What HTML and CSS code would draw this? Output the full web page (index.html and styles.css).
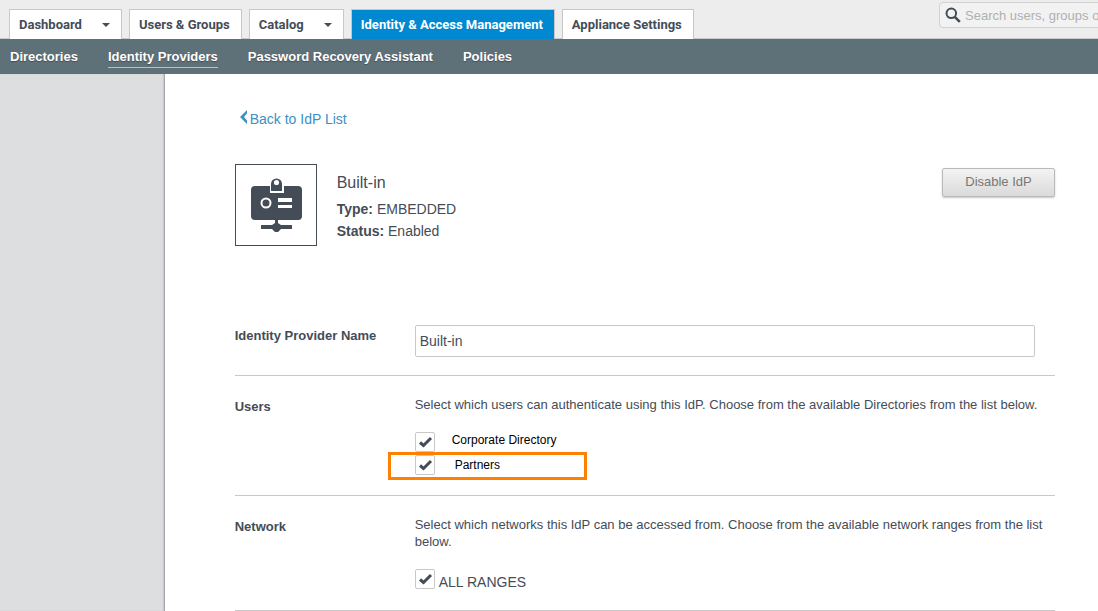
FILE: index.html
```html
<!DOCTYPE html>
<html lang="en">
<head>
<meta charset="utf-8">
<title>Identity Providers</title>
<link rel="stylesheet" href="styles.css">
</head>
<body>
<header class="topbar">
  <nav class="tabs" aria-label="Main">
    <a class="tab" href="#">Dashboard<span class="caret"></span></a>
    <a class="tab" href="#">Users &amp; Groups</a>
    <a class="tab" href="#">Catalog<span class="caret"></span></a>
    <a class="tab tab-active" href="#">Identity &amp; Access Management</a>
    <a class="tab" href="#">Appliance Settings</a>
  </nav>
  <label class="search">
    <svg class="search-icon" viewBox="0 0 16 16" aria-hidden="true"><circle cx="6.3" cy="6.3" r="4.8" fill="none" stroke="#444c55" stroke-width="2"/><path d="M9.8 9.8 14.8 14.8" stroke="#444c55" stroke-width="2.6"/></svg>
    <input class="search-input" type="text" aria-label="Search" placeholder="Search users, groups or applications">
  </label>
</header>
<nav class="subnav" aria-label="Section">
  <a class="sublink" href="#">Directories</a>
  <a class="sublink sublink-active" href="#">Identity Providers</a>
  <a class="sublink" href="#">Password Recovery Assistant</a>
  <a class="sublink" href="#">Policies</a>
</nav>
<div class="layout">
  <aside class="sidebar"></aside>
  <main class="content">
    <a class="back" href="#"><svg class="back-icon" viewBox="0 0 8 14" aria-hidden="true"><path d="M7 0v3.600L4 7l3 3.400V14L0 7z" fill="#3d8fc4"/></svg>Back to IdP List</a>
    <section class="summary">
      <div class="idp-icon">
        <svg viewBox="0 0 80 80" aria-hidden="true">
          <rect x="15" y="21" width="51" height="34" rx="4" fill="#444c57"/>
          <path d="M34 28V20a7 7 0 0 1 14 0v8z" fill="#fff"/>
          <path d="M35 26V19a5.500 5.500 0 0 1 11 0v7z" fill="#444c57"/>
          <circle cx="40.500" cy="17.500" r="2.600" fill="#fff"/>
          <circle cx="30" cy="38" r="4.500" fill="none" stroke="#fff" stroke-width="2"/>
          <path d="M42 33h14v4H42zM42 40h14v3H42z" fill="#fff"/>
          <path d="M39 55h3v3l3 2h11v4H45l-3 3h-3l-3-3H25v-4h11l3-2z" fill="#444c57"/>
        </svg>
      </div>
      <div class="details">
        <h1 class="idp-name">Built-in</h1>
        <p class="detail"><b>Type:</b> EMBEDDED</p>
        <p class="detail"><b>Status:</b> Enabled</p>
      </div>
      <button class="disable" type="button">Disable IdP</button>
    </section>
    <form class="form">
      <div class="row row-name">
        <label class="row-title" for="idp-name">Identity Provider Name</label>
        <div class="row-body"><input class="name-input" id="idp-name" type="text" value="Built-in"></div>
      </div>
      <div class="row">
        <h2 class="row-title">Users</h2>
        <div class="row-body">
          <p class="hint">Select which users can authenticate using this IdP. Choose from the available Directories from the list below.</p>
          <div class="directories">
            <label class="directory"><input class="check" type="checkbox" checked>Corporate Directory</label>
            <label class="directory directory-marked"><input class="check" type="checkbox" checked>Partners</label>
          </div>
        </div>
      </div>
      <div class="row">
        <h2 class="row-title">Network</h2>
        <div class="row-body">
          <p class="hint">Select which networks this IdP can be accessed from. Choose from the available network ranges from the list below.</p>
          <label class="range"><input class="check" type="checkbox" checked>ALL RANGES</label>
        </div>
      </div>
    </form>
  </main>
</div>
</body>
</html>
```
FILE: styles.css
```css
*, *::after { box-sizing: border-box; }
body {
  margin: 0;
  min-height: 100vh;
  display: flex;
  flex-direction: column;
  overflow-x: hidden;
  background: #fff;
  color: #444c57;
  font-family: "Liberation Sans", Arial, sans-serif;
  font-size: 14px;
}
h1, h2, p { margin: 0; }
a { text-decoration: none; }
.topbar {
  display: flex;
  align-items: flex-start;
  height: 39px;
  background: #ededed;
  border-bottom: 1px solid #c8c8c8;
  overflow-x: clip;
}
.tabs { display: flex; gap: 7px; padding: 9px 0 0 9px; }
.tab {
  display: flex;
  align-items: center;
  height: 30px;
  padding: 0 11px 0 9px;
  border: 1px solid #c8c8c8;
  border-bottom: 0;
  background: #fff;
  color: #444c57;
  font-family: Roboto, "Liberation Sans", sans-serif;
  font-size: 13px;
  font-weight: bold;
  white-space: nowrap;
}
.tab-active { background: #0089d0; color: #fff; }
.caret {
  margin-left: 20px;
  border: 4px solid transparent;
  border-top-color: #444c57;
  border-bottom: 0;
}
.search {
  display: flex;
  flex: none;
  align-items: center;
  gap: 4px;
  width: 240px;
  height: 26px;
  margin: 2px -81px 0 auto;
  padding: 0 5px;
  border: 1px solid #d2d2d2;
  border-radius: 4px;
  background: #f2f2f2;
}
.search-icon { flex: none; width: 16px; height: 16px; }
.search-input {
  flex: 1;
  min-width: 0;
  padding: 0;
  border: 0;
  background: none;
  font: inherit;
  font-size: 13px;
}
.search-input::placeholder { color: #b0b0b0; }
.subnav {
  display: flex;
  align-items: flex-start;
  gap: 30px;
  height: 35px;
  padding: 9px 10px 0;
  background: #5f7178;
}
.sublink {
  height: 20px;
  border-bottom: 1px solid transparent;
  color: #fff;
  font-size: 13px;
  font-weight: bold;
  line-height: 17px;
  text-shadow: 0 1px 1px #444c57;
}
.sublink-active { border-color: #b5c2c8; }
.layout { display: grid; grid-template-columns: 15% 1fr; flex: 1; }
.sidebar { background: #dddee0; box-shadow: inset -2px 0 2px -1px #909396; }
.content { padding: 36px 43px 0 70px; }
.back {
  display: inline-flex;
  gap: 2px;
  padding-left: 5px;
  color: #3d8fc4;
  line-height: 18px;
}
.back-icon { width: 8px; height: 14px; }
.summary {
  display: flex;
  align-items: flex-start;
  margin-top: 36px;
}
.idp-icon { width: 82px; height: 82px; border: 1px solid #444c57; }
.idp-icon svg { display: block; }
.details { flex: 1; margin: 8px 0 0 20px; }
.idp-name { margin-bottom: 4px; font-size: 16px; font-weight: normal; line-height: 22px; }
.detail { line-height: 22px; }
.disable {
  width: 113px;
  height: 29px;
  margin-top: 4px;
  padding-bottom: 3px;
  border: 1px solid #bababa;
  border-radius: 2px;
  background: linear-gradient(#f3f3f3, #dadada);
  box-shadow: 0 1px 2px #c8c8c8;
  color: #777;
  font: inherit;
  font-size: 13px;
}
.form { margin-top: 79px; }
.row {
  display: grid;
  grid-template-columns: 180px 1fr;
  min-height: 115px;
  padding-top: 20px;
  border-bottom: 1px solid #c8c8c8;
}
.row-name { min-height: 51px; padding: 0 0 18px; }
.row-title { padding-top: 2px; font-size: 13px; font-weight: bold; line-height: 18px; }
.name-input {
  display: block;
  width: calc(100% - 20px);
  height: 32px;
  padding: 0 4px;
  border: 1px solid #c8c8c8;
  border-radius: 2px;
  color: #444c57;
  font: inherit;
}
.hint { font-size: 13px; line-height: 17px; }
.check {
  flex: none;
  appearance: none;
  width: 20px;
  height: 20px;
  margin: 0;
  border: 1px solid #c8c8c8;
  border-radius: 2px;
  background: #fff url("data:image/svg+xml,%3Csvg xmlns='http://www.w3.org/2000/svg' viewBox='0 0 18 18'%3E%3Cpath d='M4 9.500L7.500 12.500L15 5' fill='none' stroke='%23444c57' stroke-width='3'/%3E%3C/svg%3E");
}
.directories { display: grid; justify-items: start; gap: 3px; margin-top: 19px; padding-bottom: 20px; }
.directory { position: relative; display: flex; gap: 17px; color: #000; font-size: 12px; line-height: 16px; }
.directory-marked { gap: 20px; line-height: 20px; }
.directory-marked::after {
  content: "";
  position: absolute;
  top: -3px;
  left: -27px;
  width: 199px;
  height: 28px;
  border: 3px solid #ff8000;
}
.range { display: flex; gap: 4px; margin-top: 19px; padding-bottom: 15px; line-height: 26px; }
```
